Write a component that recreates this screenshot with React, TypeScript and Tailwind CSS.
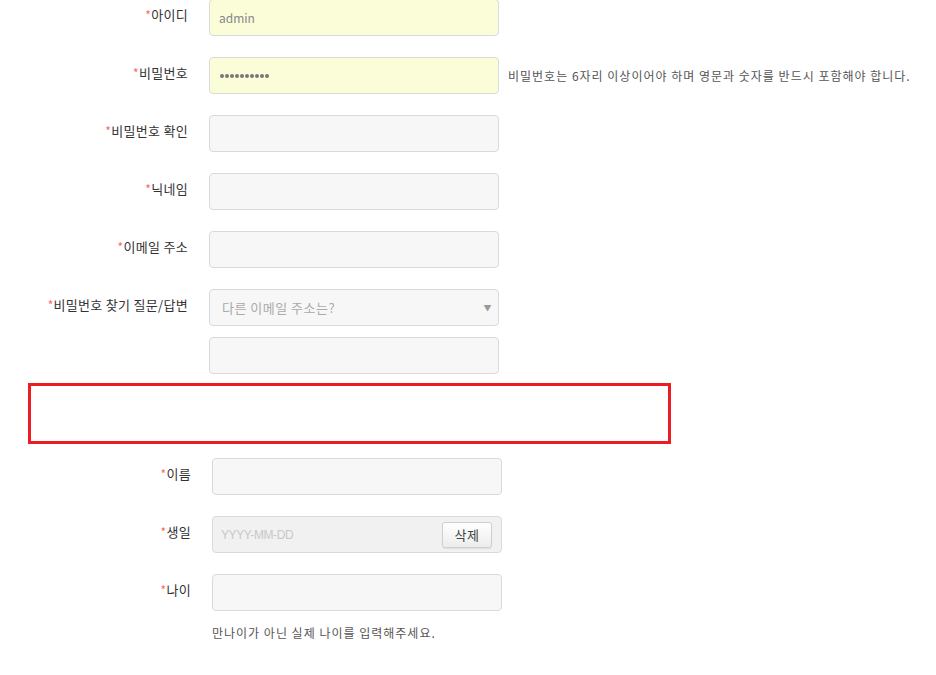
const FONT = "font-['Malgun_Gothic','Noto_Sans_CJK_KR','Noto_Sans',sans-serif]";

function Label({ text, width }: { text: string; width: string }) {
  return (
    <div className={`${width} shrink-0 pt-[7px] text-right text-[13px] leading-[18px] tracking-[0.3px] text-[#333]`}>
      <span className="text-[#f66] text-[12px] align-top">*</span>
      {text}
    </div>
  );
}

function Field({ filled, children }: { filled?: boolean; children?: React.ReactNode }) {
  return (
    <div
      className={`w-[290px] h-[37px] rounded-[4px] border border-[#dadada] flex items-center px-2 text-[13px] ${
        filled ? 'bg-[#fbfdd8]' : 'bg-[#f7f7f7]'
      }`}
    >
      {children}
    </div>
  );
}

export default function App() {
  return (
    <div className={`${FONT} w-[936px] h-[675px] bg-white overflow-hidden`}>
      {/* top section */}
      <div className="flex flex-col gap-[21px] -mt-px">
        <div className="flex gap-[21px]">
          <Label text="아이디" width="w-[188px]" />
          <Field filled>
            <span className="text-[#888] text-[12px] pl-[1px]">admin</span>
          </Field>
        </div>
        <div className="flex gap-[21px]">
          <Label text="비밀번호" width="w-[188px]" />
          <Field filled>
            <div className="flex gap-px pl-[2px]">
              {Array.from({ length: 10 }).map((_, i) => (
                <span key={i} className="w-[4px] h-[4px] rounded-full bg-[#777]" />
              ))}
            </div>
          </Field>
          <div className="-ml-[12px] pt-[10px] text-[12px] tracking-[1px] text-[#555]">
            비밀번호는 6자리 이상이어야 하며 영문과 숫자를 반드시 포함해야 합니다.
          </div>
        </div>
        <div className="flex gap-[21px]">
          <Label text="비밀번호 확인" width="w-[188px]" />
          <Field />
        </div>
        <div className="flex gap-[21px]">
          <Label text="닉네임" width="w-[188px]" />
          <Field />
        </div>
        <div className="flex gap-[21px]">
          <Label text="이메일 주소" width="w-[188px]" />
          <Field />
        </div>
        <div className="flex gap-[21px]">
          <Label text="비밀번호 찾기 질문/답변" width="w-[188px]" />
          <div className="flex flex-col gap-[11px]">
            <div className="w-[290px] h-[37px] rounded-[4px] border border-[#dadada] bg-[#f7f7f7] flex items-center justify-between pl-3 pr-[6px] text-[13px] tracking-[0.5px]">
              <span className="text-[#aaa]">다른 이메일 주소는?</span>
              <span className="text-[#999] text-[8px]">▼</span>
            </div>
            <Field />
          </div>
        </div>
      </div>

      {/* highlighted empty block */}
      <div className="ml-[28px] mt-[9px] w-[643px] h-[61px] border-[3px] border-[#ed1c24]" />

      {/* bottom section */}
      <div className="flex flex-col gap-[21px] mt-[14px]">
        <div className="flex gap-[21px]">
          <Label text="이름" width="w-[191px]" />
          <Field />
        </div>
        <div className="flex gap-[21px]">
          <Label text="생일" width="w-[191px]" />
          <div className="w-[290px] h-[37px] rounded-[4px] border border-[#dadada] bg-[#f1f1f1] flex items-center justify-between pl-[8px] pr-[9px] text-[13px]">
            <span className="text-[#c8c8c8] text-[12px] font-['Liberation_Sans',sans-serif] tracking-[-0.4px]">YYYY-MM-DD</span>
            <button className="w-[50px] h-[26px] rounded-[3px] border border-[#cfcfcf] bg-gradient-to-b from-white to-[#ececec] text-[13px] text-[#444] tracking-[0.5px] shadow-[0_1px_1px_rgba(0,0,0,0.08)]">
              삭제
            </button>
          </div>
        </div>
        <div className="flex gap-[21px]">
          <Label text="나이" width="w-[191px]" />
          <div className="flex flex-col">
            <Field />
            <div className="mt-[13px] text-[12px] tracking-[1px] text-[#555]">만나이가 아닌 실제 나이를 입력해주세요.</div>
          </div>
        </div>
      </div>
    </div>
  );
}
